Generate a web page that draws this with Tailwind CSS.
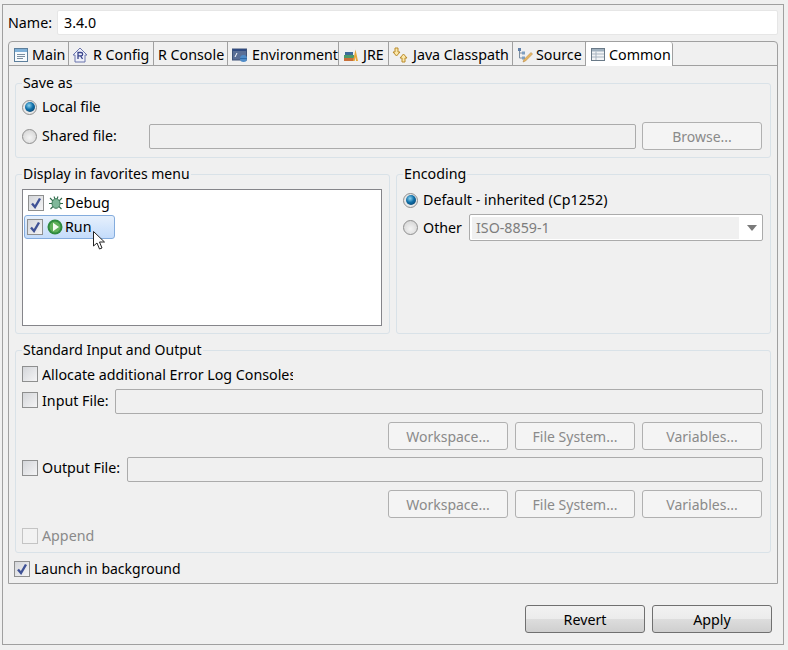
<!DOCTYPE html>
<html lang="en">
<head>
<meta charset="UTF-8">
<title>Run Configuration - Common</title>
<script src="https://cdn.jsdelivr.net/npm/@tailwindcss/browser@4"></script>
</head>
<body class="relative w-[788px] h-[650px] overflow-hidden bg-[#f0f0f0] text-[14.25px] leading-[20px] text-black font-['Noto_Sans',sans-serif]">

<!-- outer frame -->
<div class="ml-[2px] mt-[4px] w-[782px] h-[641px] border border-[#a0a0a0] flex flex-col pl-[5px]">

  <!-- name row -->
  <div class="flex items-center h-[25px] mt-[5px]">
    <span class="w-[49px]">Name:</span>
    <div class="w-[721px] h-[25px] bg-white rounded-[2px] border border-[#e6e6e6] pl-[6px] leading-[23px]">3.4.0</div>
  </div>

  <!-- tab folder -->
  <div class="mt-[6px] w-[770px] h-[543px] border border-[#a0a0a0] rounded-t-[4px] flex flex-col">
    <div class="flex h-[23px] border-b border-[#a0a0a0] box-content">
      <div class="w-[60px] flex items-center gap-[3px] pl-[4px] pt-[2px] border-r border-[#a0a0a0]">
        <svg class="w-[16px] h-[16px] shrink-0" viewBox="0 0 16 16"><rect x="1.5" y="1.5" width="13" height="13" fill="#f6fafd" stroke="#5d7f9c"/><rect x="2" y="2" width="12" height="3" fill="#7fb0d8"/><path d="M4 7.5h8M4 9.5h8M4 11.5h6" stroke="#7b8ea0"/></svg>
        <span>Main</span>
      </div>
      <div class="w-[85px] flex items-center gap-[5px] pl-[3px] pt-[2px] border-r border-[#a0a0a0]">
        <svg class="w-[16px] h-[16px] shrink-0" viewBox="0 0 16 16"><path d="M8 1 L15 8 H13 V15 H3 V8 H1 Z" fill="#eef0fa" stroke="#6a74ac"/><path d="M6 12V5.5h3a1.6 1.6 0 0 1 0 3.3H6M8.6 8.8 10.5 12" fill="none" stroke="#39448c" stroke-width="1.3"/></svg>
        <span>R Config</span>
      </div>
      <div class="w-[74px] flex items-center pl-[4px] pt-[2px] border-r border-[#a0a0a0]"><span class="whitespace-nowrap">R Console</span></div>
      <div class="w-[111px] flex items-center gap-[4px] pl-[4px] pt-[2px] border-r border-[#a0a0a0]">
        <svg class="w-[16px] h-[16px] shrink-0" viewBox="0 0 16 16"><rect x="0.5" y="2" width="14" height="11" fill="#5a6f96" stroke="#3e5378"/><rect x="1" y="2" width="13" height="2" fill="#2f4a80"/><path d="M3 10 5 6" stroke="#fff"/><circle cx="11.5" cy="11.5" r="3.5" fill="#4f8cc8"/><rect x="8" y="11" width="7" height="1" fill="#2f6aa8"/></svg>
        <span>Environment</span>
      </div>
      <div class="w-[50px] flex items-center gap-[4px] pl-[4px] pt-[2px] border-r border-[#a0a0a0]">
        <svg class="w-[16px] h-[16px] shrink-0" viewBox="0 0 16 16"><rect x="1" y="11" width="10" height="3" fill="#c8703a"/><rect x="1" y="8" width="10" height="3" fill="#4c9a6a"/><rect x="2" y="5" width="8" height="3" fill="#3c6a9a"/><path d="M10 14 12.500 2.500 15 14h-2l-.5-4-.8 4z" fill="#e8a83a"/></svg>
        <span>JRE</span>
      </div>
      <div class="w-[124px] flex items-center gap-[5px] pl-[3px] pt-[2px] border-r border-[#a0a0a0]">
        <svg class="w-[16px] h-[16px] shrink-0" viewBox="0 0 16 16"><path d="M3 1h3v4h2L4.500 9 1 5h2z" fill="#fbe7a8" stroke="#b98a2a"/><path d="M10 15h3v-4h2l-3.500-4L8 11h2z" fill="#fbe7a8" stroke="#b98a2a"/></svg>
        <span class="whitespace-nowrap">Java Classpath</span>
      </div>
      <div class="w-[73px] flex items-center gap-[3px] pl-[4px] pt-[2px] border-r border-[#a0a0a0]">
        <svg class="w-[16px] h-[16px] shrink-0" viewBox="0 0 16 16"><path d="M2.500 3v8h3M2.500 6h3" fill="none" stroke="#7a8ca0"/><rect x="1" y="1" width="3" height="3" fill="#5f7fa8"/><rect x="5" y="4.500" width="3" height="3" fill="#7f9fc0"/><rect x="5" y="9.500" width="3" height="3" fill="#7f9fc0"/><path d="M14 5.500 15.500 7 8.500 14 6 15l1-2.500z" fill="#e8b860" stroke="#b98a4a" stroke-width=".6"/></svg>
        <span>Source</span>
      </div>
      <div class="w-[87px] h-[24px] bg-white flex items-center gap-[3px] pl-[4px] pt-[2px] border-r border-[#a0a0a0] rounded-tl-[2px] rounded-tr-[3px]">
        <svg class="w-[16px] h-[16px] shrink-0" viewBox="0 0 16 16"><rect x="1.500" y="1.500" width="13" height="12" fill="#f2f4f6" stroke="#6a7a88"/><rect x="2" y="2" width="12" height="2.500" fill="#9fb0be"/><path d="M2 7h12M2 10h12M6 4.500V13" stroke="#a8b4c0"/></svg>
        <span>Common</span>
      </div>
    </div>

    <div class="flex-1 flex flex-col pl-[6px]">
      <!-- Save as -->
      <fieldset class="mt-[8px] w-[756px] h-[84px] border border-[#d9e2e8] rounded-[3px] px-[6px]">
        <legend class="px-px leading-[18px]">Save as</legend>
        <div class="flex items-center gap-[5px] h-[20px] mt-[5px]">
          <span class="w-[15px] h-[15px] rounded-full border border-[#8f8f8f] bg-[#e8e8e8] flex items-center justify-center"><span class="w-[10px] h-[10px] rounded-full bg-[radial-gradient(circle_at_40%_35%,#8fd4f0,#0f6fa8_45%,#0a3358)]"></span></span>
          <span>Local file</span>
        </div>
        <div class="flex items-center h-[28px] mt-[5px]">
          <span class="w-[15px] h-[15px] rounded-full border border-[#8f8f8f] bg-[radial-gradient(circle_at_50%_60%,#f4f4f4,#cfcfcf)]"></span>
          <span class="ml-[5px] w-[107px]">Shared file:</span>
          <div class="w-[487px] h-[25px] border border-[#ababab] rounded-[2px]"></div>
          <div class="ml-[6px] w-[120px] h-[28px] pt-px bg-[#f4f4f4] border border-[#b0b0b0] rounded-[3px] text-[14px] text-[#8a8a8a] flex items-center justify-center">Browse...</div>
        </div>
      </fieldset>

      <div class="flex gap-[6px] mt-[7px]">
        <!-- favorites -->
        <fieldset class="w-[375px] h-[169px] border border-[#d9e2e8] rounded-[3px] px-[6px]">
          <legend class="px-px leading-[18px] text-[14px]">Display in favorites menu</legend>
          <div class="w-[360px] h-[137px] bg-white border border-[#85858a] mt-[6px] pt-[1px] pl-[2px]">
            <div class="flex items-center w-[90px] h-[24px] pl-[3px]">
              <span class="w-[16px] h-[16px] border border-[#8e8f8f] bg-[linear-gradient(135deg,#d4d6da,#f4f4f5)] flex items-center justify-center"><svg class="w-[12px] h-[12px]" viewBox="0 0 12 12"><path d="M2 6.500 5 10 10 1.500" fill="none" stroke="#3f5296" stroke-width="2.400"/></svg></span>
              <svg class="w-[16px] h-[16px] ml-[4px] shrink-0" viewBox="0 0 16 16"><path d="M2 3l3 3M14 3l-3 3M1 8.500h3M15 8.500h-3M2.500 14 5 11.500M13.500 14 11 11.500M6 1.500l1 2.500M10 1.500 9 4" stroke="#2f6a4a" stroke-width="1.100"/><ellipse cx="8" cy="8.500" rx="4" ry="4.800" fill="#7fb89a" stroke="#3f7a5a"/></svg>
              <span class="ml-px">Debug</span>
            </div>
            <div class="flex items-center w-[91px] h-[24px] pl-[2px] -ml-px border border-[#84acdd] rounded-[3px] bg-[linear-gradient(#e6f0fc,#c4dcfb)]">
              <span class="w-[16px] h-[16px] border border-[#8e8f8f] bg-[linear-gradient(135deg,#d4d6da,#f4f4f5)] flex items-center justify-center"><svg class="w-[12px] h-[12px]" viewBox="0 0 12 12"><path d="M2 6.500 5 10 10 1.500" fill="none" stroke="#3f5296" stroke-width="2.400"/></svg></span>
              <svg class="w-[16px] h-[16px] ml-[4px] shrink-0" viewBox="0 0 16 16"><circle cx="8" cy="8" r="7.500" fill="#2f8a3f"/><circle cx="8" cy="8" r="5.500" fill="#5fb05a"/><path d="M6 3.800 12 8l-6 4.200z" fill="#f4fbf2"/></svg>
              <span class="ml-[2px]">Run</span>
            </div>
          </div>
        </fieldset>
        <!-- encoding -->
        <fieldset class="w-[375px] h-[169px] border border-[#d9e2e8] rounded-[3px] px-[6px]">
          <legend class="px-px leading-[18px]">Encoding</legend>
          <div class="flex items-center gap-[5px] h-[20px] mt-[7px]">
            <span class="w-[15px] h-[15px] rounded-full border border-[#8f8f8f] bg-[#e8e8e8] flex items-center justify-center"><span class="w-[10px] h-[10px] rounded-full bg-[radial-gradient(circle_at_40%_35%,#8fd4f0,#0f6fa8_45%,#0a3358)]"></span></span>
            <span>Default - inherited (Cp1252)</span>
          </div>
          <div class="flex items-center h-[27px] mt-[4px]">
            <span class="w-[15px] h-[15px] rounded-full border border-[#8f8f8f] bg-[radial-gradient(circle_at_50%_60%,#f4f4f4,#cfcfcf)]"></span>
            <span class="ml-[5px] w-[46px]">Other</span>
            <div class="w-[294px] h-[27px] bg-white border border-[#ababab] rounded-[2px] flex items-center pl-[2px]">
              <div class="w-[267px] h-[22px] bg-[#f0f0f0] pl-[4px] text-[#7d7d7d] leading-[21px]">ISO-8859-1</div>
              <svg class="ml-[8px] w-[10px] h-[6px]" viewBox="0 0 10 6"><path d="M0 0h10L5 6z" fill="#7a7a7a"/></svg>
            </div>
          </div>
        </fieldset>
      </div>

      <!-- standard input and output -->
      <fieldset class="mt-[7px] w-[756px] h-[212px] border border-[#d9e2e8] rounded-[3px] px-[6px]">
        <legend class="px-px leading-[18px] text-[14px]">Standard Input and Output</legend>
        <div class="flex items-center h-[20px] mt-[6px]">
          <span class="w-[16px] h-[16px] -mt-[2px] border border-[#8e8f8f] bg-[linear-gradient(135deg,#d4d6da,#f4f4f5)]"></span>
          <span class="ml-[4px] w-[251px] overflow-hidden whitespace-nowrap">Allocate additional Error Log Consoles</span>
        </div>
        <div class="flex items-center h-[25px] mt-[4px]">
          <span class="w-[16px] h-[16px] -mt-[3px] border border-[#8e8f8f] bg-[linear-gradient(135deg,#d4d6da,#f4f4f5)]"></span>
          <span class="ml-[4px] w-[73px] -mt-[2px]">Input File:</span>
          <div class="w-[648px] h-[25px] border border-[#ababab] rounded-[2px]"></div>
        </div>
        <div class="flex justify-end gap-[7px] mt-[8px] pr-[2px]">
          <div class="w-[120px] h-[28px] pt-px bg-[#f4f4f4] border border-[#b0b0b0] rounded-[3px] text-[14px] text-[#8a8a8a] flex items-center justify-center">Workspace...</div>
          <div class="w-[120px] h-[28px] pt-px bg-[#f4f4f4] border border-[#b0b0b0] rounded-[3px] text-[14px] text-[#8a8a8a] flex items-center justify-center">File System...</div>
          <div class="w-[120px] h-[28px] pt-px bg-[#f4f4f4] border border-[#b0b0b0] rounded-[3px] text-[14px] text-[#8a8a8a] flex items-center justify-center">Variables...</div>
        </div>
        <div class="flex items-center h-[25px] mt-[7px]">
          <span class="w-[16px] h-[16px] -mt-[3px] border border-[#8e8f8f] bg-[linear-gradient(135deg,#d4d6da,#f4f4f5)]"></span>
          <span class="ml-[4px] w-[85px] -mt-[3px]">Output File:</span>
          <div class="w-[636px] h-[25px] border border-[#ababab] rounded-[2px]"></div>
        </div>
        <div class="flex justify-end gap-[7px] mt-[8px] pr-[2px]">
          <div class="w-[120px] h-[28px] pt-px bg-[#f4f4f4] border border-[#b0b0b0] rounded-[3px] text-[14px] text-[#8a8a8a] flex items-center justify-center">Workspace...</div>
          <div class="w-[120px] h-[28px] pt-px bg-[#f4f4f4] border border-[#b0b0b0] rounded-[3px] text-[14px] text-[#8a8a8a] flex items-center justify-center">File System...</div>
          <div class="w-[120px] h-[28px] pt-px bg-[#f4f4f4] border border-[#b0b0b0] rounded-[3px] text-[14px] text-[#8a8a8a] flex items-center justify-center">Variables...</div>
        </div>
        <div class="flex items-center h-[20px] mt-[8px]">
          <span class="w-[16px] h-[16px] border border-[#c4c4c4] bg-[#f2f2f2]"></span>
          <span class="ml-[4px] text-[#8a8a8a]">Append</span>
        </div>
      </fieldset>

      <div class="flex items-center h-[20px] mt-[6px] -ml-px">
        <span class="w-[16px] h-[16px] border border-[#8e8f8f] bg-[linear-gradient(135deg,#d4d6da,#f4f4f5)] flex items-center justify-center"><svg class="w-[12px] h-[12px]" viewBox="0 0 12 12"><path d="M2 6.500 5 10 10 1.500" fill="none" stroke="#3f5296" stroke-width="2.400"/></svg></span>
        <span class="ml-[4px] text-[14px]">Launch in background</span>
      </div>
    </div>
  </div>

  <!-- bottom buttons -->
  <div class="flex justify-end gap-[7px] mt-[21px] w-[764px]">
    <div class="w-[120px] h-[28px] pt-px border border-[#707070] rounded-[3px] bg-[linear-gradient(#f2f2f2_0%,#ebebeb_50%,#dddddd_50%,#cfcfcf_100%)] flex items-center justify-center">Revert</div>
    <div class="w-[120px] h-[28px] pt-px border border-[#707070] rounded-[3px] bg-[linear-gradient(#f2f2f2_0%,#ebebeb_50%,#dddddd_50%,#cfcfcf_100%)] flex items-center justify-center">Apply</div>
  </div>
</div>

<!-- mouse pointer over the Run row -->
<svg class="absolute left-[93px] top-[231px] w-[13px] h-[19px]" viewBox="0 0 13 19"><path d="M.500 .500V15l3.500-3 2.500 6 2.500-1-2.500-6h5z" fill="#fff" stroke="#222"/></svg>

</body>
</html>
